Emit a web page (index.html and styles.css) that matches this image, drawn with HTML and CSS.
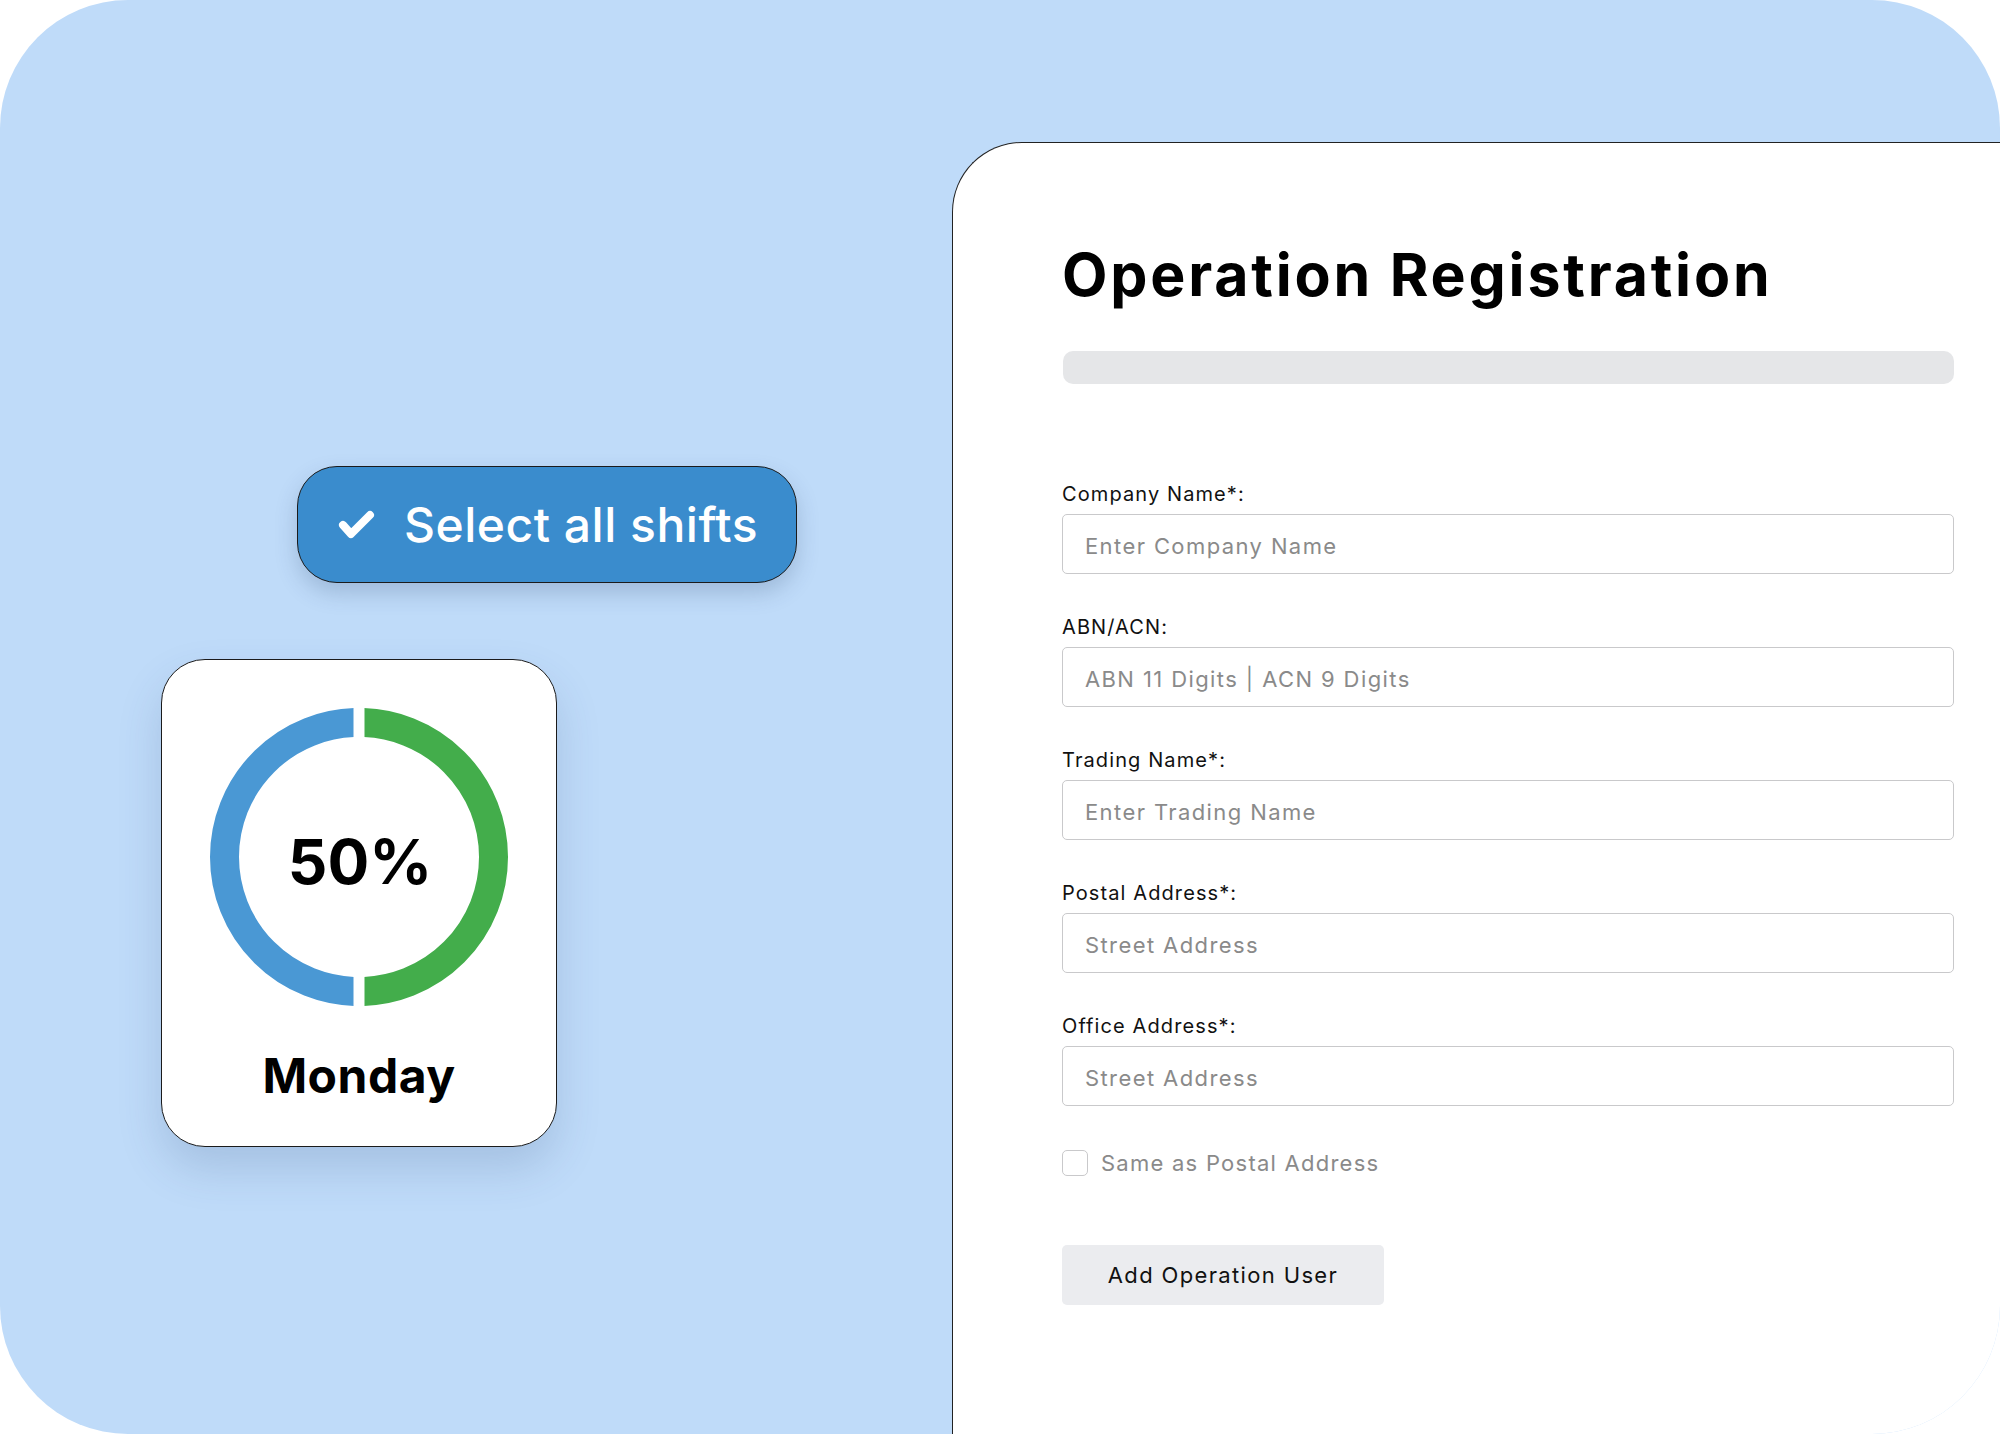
FILE: index.html
```html
<!DOCTYPE html>
<html lang="en">
<head>
<meta charset="utf-8">
<title>Operation Registration</title>
<link rel="stylesheet" href="styles.css">
</head>
<body>
<div class="frame">
  <div class="left">
    <button class="select-btn" type="button">
      <svg class="check" width="44" height="36" viewBox="0 0 44 36" aria-hidden="true">
        <path d="M9 18 L17 27 L36 8" fill="none" stroke="#fff" stroke-width="8" stroke-linecap="round" stroke-linejoin="round"/>
      </svg>
      <span>Select all shifts</span>
    </button>
    <div class="day-card">
      <div class="donut">
        <svg width="298" height="298" viewBox="0 0 298 298" aria-hidden="true">
          <defs>
            <clipPath id="leftHalf"><rect x="0" y="0" width="143.5" height="298"/></clipPath>
            <clipPath id="rightHalf"><rect x="154.5" y="0" width="143.5" height="298"/></clipPath>
          </defs>
          <circle cx="149" cy="149" r="134.5" fill="none" stroke="#4A98D4" stroke-width="29" clip-path="url(#leftHalf)"/>
          <circle cx="149" cy="149" r="134.5" fill="none" stroke="#43AD4B" stroke-width="29" clip-path="url(#rightHalf)"/>
        </svg>
        <div class="pct">50%</div>
      </div>
      <div class="day">Monday</div>
    </div>
  </div>
  <div class="panel">
    <h1 class="title">Operation Registration</h1>
    <div class="progress"></div>
    <form class="form">
      <div class="field">
        <label class="label">Company Name*:</label>
        <div class="input">Enter Company Name</div>
      </div>
      <div class="field">
        <label class="label">ABN/ACN:</label>
        <div class="input">ABN 11 Digits | ACN 9 Digits</div>
      </div>
      <div class="field">
        <label class="label">Trading Name*:</label>
        <div class="input">Enter Trading Name</div>
      </div>
      <div class="field">
        <label class="label">Postal Address*:</label>
        <div class="input">Street Address</div>
      </div>
      <div class="field">
        <label class="label">Office Address*:</label>
        <div class="input">Street Address</div>
      </div>
      <div class="check-row">
        <span class="box"></span>
        <span class="check-text">Same as Postal Address</span>
      </div>
      <div class="add-btn">Add Operation User</div>
    </form>
  </div>
</div>
</body>
</html>
```
FILE: styles.css
```css
* { box-sizing: border-box; }
html, body {
  margin: 0;
  padding: 0;
  background: #ffffff;
}
body {
  font-family: Inter, "Noto Sans", "Liberation Sans", sans-serif;
  color: #000;
}
.frame {
  width: 2000px;
  height: 1434px;
  background: #BFDBF9;
  border-radius: 128px;
  overflow: hidden;
  display: flex;
  align-items: flex-start;
}
.left {
  width: 952px;
  flex: none;
  padding-top: 466px;
  display: flex;
  flex-direction: column;
  align-items: flex-start;
}
.select-btn {
  margin-left: 297px;
  width: 500px;
  height: 117px;
  border: 1.5px solid #1b1b1b;
  border-radius: 40px;
  background: #3A8CCD;
  box-shadow: 0 10px 22px rgba(40, 70, 110, 0.22);
  display: flex;
  align-items: center;
  padding: 0 0 0 36px;
  gap: 26px;
  color: #fff;
  font-family: Inter, "Noto Sans", sans-serif;
  font-size: 48px;
  font-weight: 500;
  letter-spacing: 0.5px;
  cursor: pointer;
}
.check { flex: none; }
.day-card {
  margin-top: 76px;
  margin-left: 161px;
  width: 396px;
  height: 488px;
  background: #fff;
  border: 1.5px solid #1b1b1b;
  border-radius: 44px;
  box-shadow: 0 22px 44px rgba(50, 80, 130, 0.18);
  display: flex;
  flex-direction: column;
  align-items: center;
  padding-top: 48px;
}
.donut {
  position: relative;
  width: 298px;
  height: 298px;
}
.donut svg { display: block; }
.pct {
  position: absolute;
  inset: 0;
  display: flex;
  align-items: center;
  justify-content: center;
  font-size: 62px;
  font-weight: 700;
  padding-top: 9px;
  padding-left: 2px;
}
.day {
  margin-top: 40px;
  font-size: 48px;
  font-weight: 700;
  letter-spacing: 0.5px;
}
.panel {
  flex: 1;
  align-self: stretch;
  margin-top: 142px;
  background: #fff;
  border-top: 1.5px solid #222;
  border-left: 1.5px solid #222;
  border-top-left-radius: 70px;
  padding: 96px 46px 0 109px;
}
.title {
  margin: 0;
  font-size: 59px;
  line-height: 72px;
  font-weight: 700;
  letter-spacing: 2.8px;
}
.progress {
  margin-top: 40px;
  margin-left: 1px;
  height: 33px;
  border-radius: 10px;
  background: #E5E6E8;
}
.form {
  margin-top: 98px;
  display: flex;
  flex-direction: column;
}
.field {
  display: flex;
  flex-direction: column;
  margin-bottom: 41px;
}
.label {
  font-size: 20px;
  line-height: 24px;
  color: #111;
  margin-bottom: 8px;
  letter-spacing: 1.1px;
}
.input {
  height: 60px;
  border: 1.5px solid #C9C9CB;
  border-radius: 5px;
  padding-left: 22px;
  padding-top: 3px;
  display: flex;
  align-items: center;
  font-size: 22px;
  color: #8A8A8A;
  letter-spacing: 1.4px;
}
.check-row {
  margin-top: 3px;
  display: flex;
  align-items: center;
  gap: 13px;
}
.box {
  width: 26px;
  height: 26px;
  border: 1.5px solid #C9C9CB;
  border-radius: 5px;
}
.check-text {
  font-size: 22px;
  color: #8A8A8A;
  letter-spacing: 1.25px;
}
.add-btn {
  margin-top: 69px;
  width: 322px;
  height: 60px;
  border-radius: 5px;
  background: #EBECEF;
  display: flex;
  align-items: center;
  justify-content: center;
  font-size: 22px;
  color: #111;
  letter-spacing: 1.35px;
}
```
